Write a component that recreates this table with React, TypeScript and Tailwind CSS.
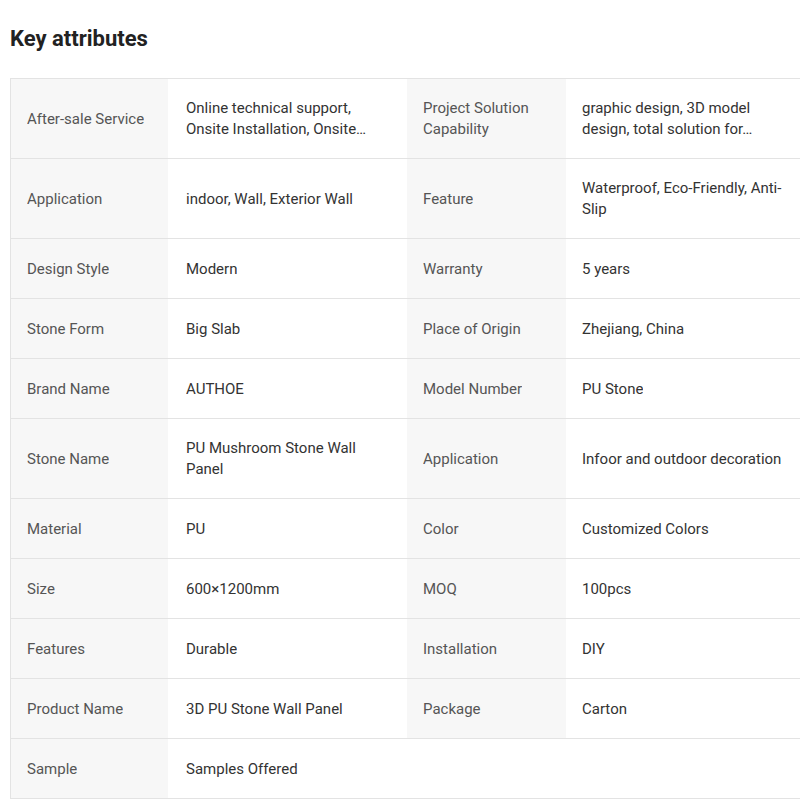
import React from 'react';

type Attr = [string, string];

const rows: [Attr, Attr | null][] = [
  [['After-sale Service', 'Online technical support, Onsite Installation, Onsite…'], ['Project Solution Capability', 'graphic design, 3D model design, total solution for…']],
  [['Application', 'indoor, Wall, Exterior Wall'], ['Feature', 'Waterproof, Eco-Friendly, Anti-Slip']],
  [['Design Style', 'Modern'], ['Warranty', '5 years']],
  [['Stone Form', 'Big Slab'], ['Place of Origin', 'Zhejiang, China']],
  [['Brand Name', 'AUTHOE'], ['Model Number', 'PU Stone']],
  [['Stone Name', 'PU Mushroom Stone Wall Panel'], ['Application', 'Infoor and outdoor decoration']],
  [['Material', 'PU'], ['Color', 'Customized Colors']],
  [['Size', '600×1200mm'], ['MOQ', '100pcs']],
  [['Features', 'Durable'], ['Installation', 'DIY']],
  [['Product Name', '3D PU Stone Wall Panel'], ['Package', 'Carton']],
  [['Sample', 'Samples Offered'], null],
];

const Label: React.FC<{ text?: string }> = ({ text }) => (
  <div className="flex items-center px-4 pt-[19px] pb-[18px] bg-[#f7f7f7] text-[#555]">
    <span className="line-clamp-2">{text}</span>
  </div>
);

const Value: React.FC<{ text?: string; pad?: string }> = ({ text, pad = 'px-[18px]' }) => (
  <div className={`flex items-center ${pad} pt-[19px] pb-[18px] text-[#333]`}>
    <span className="line-clamp-2">{text}</span>
  </div>
);

export default function App() {
  return (
    <div className="w-[800px] h-[800px] overflow-hidden bg-white pl-[10px] font-['Roboto','Liberation_Sans',sans-serif]">
      <h2 className="pt-[21px] pb-[21px] text-[22px] leading-[36px] font-bold text-[#222]">Key attributes</h2>
      <div className="w-[796px] border-t border-l border-[#e3e3e3] text-[15px] leading-[21px]">
        {rows.map(([a, b], i) => (
          <div key={i} className="grid grid-cols-[157px_239px_159px_1fr] min-h-[60px] border-b border-[#e3e3e3]">
            <Label text={a[0]} />
            <Value text={a[1]} />
            {b ? <Label text={b[0]} /> : <div />}
            <Value text={b ? b[1] : undefined} pad="px-4" />
          </div>
        ))}
      </div>
    </div>
  );
}
